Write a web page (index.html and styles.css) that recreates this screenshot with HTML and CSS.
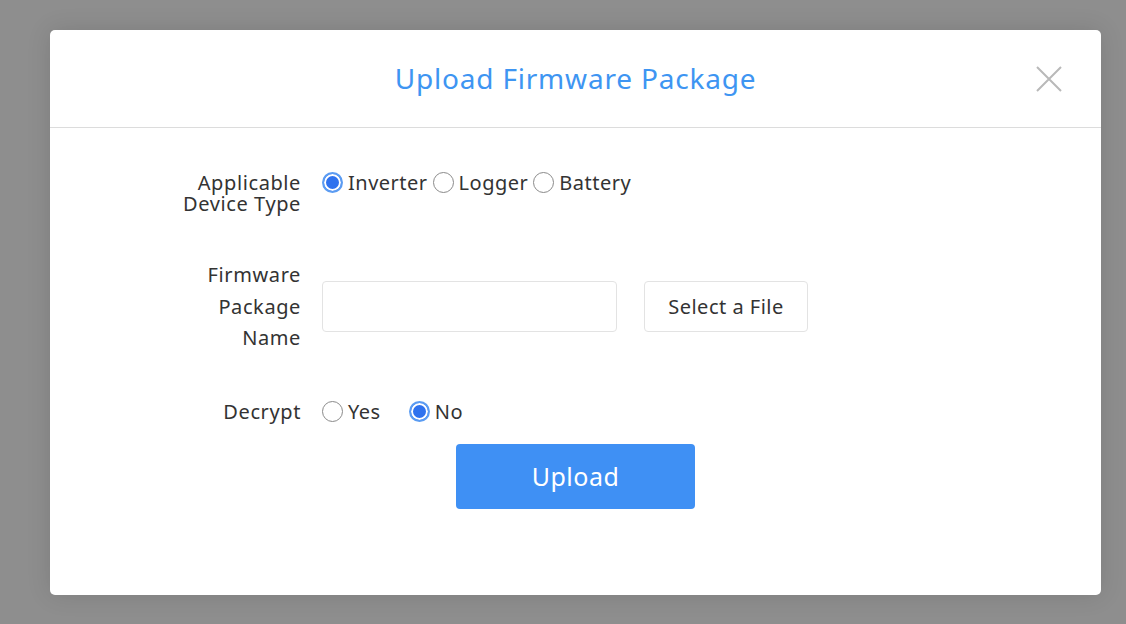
FILE: index.html
```html
<!DOCTYPE html>
<html lang="en">
<head>
  <meta charset="UTF-8" />
  <title>Upload Firmware Package</title>
  <link rel="stylesheet" href="styles.css">
</head>
<body>
  <div class="dialog">
    <div class="dialog-header">
      <h2 class="dialog-title">Upload Firmware Package</h2>
      <span class="close-btn">
        <svg width="26" height="26" viewBox="0 0 26 26"><path d="M1 1L25 25M25 1L1 25" stroke="#b9b9b9" stroke-width="2" fill="none"/></svg>
      </span>
    </div>

    <div class="dialog-body">
      <div class="form-row row-type">
        <div class="form-label">Applicable<br>Device Type</div>
        <div class="radio-group">
          <label class="radio"><span class="dot checked"></span>Inverter</label>
          <label class="radio"><span class="dot"></span>Logger</label>
          <label class="radio"><span class="dot"></span>Battery</label>
        </div>
      </div>

      <div class="form-row row-file">
        <div class="form-label tall">Firmware<br>Package<br>Name</div>
        <div class="file-group">
          <input type="text" class="file-name" />
          <button class="select-btn">Select a File</button>
        </div>
      </div>

      <div class="form-row row-decrypt">
        <div class="form-label">Decrypt</div>
        <div class="radio-group wide">
          <label class="radio"><span class="dot"></span>Yes</label>
          <label class="radio"><span class="dot checked"></span>No</label>
        </div>
      </div>

      <div class="actions">
        <button class="upload-btn">Upload</button>
      </div>
    </div>
  </div>
</body>
</html>
```

FILE: styles.css
```css
* {
  margin: 0;
  padding: 0;
  box-sizing: border-box;
}
body {
  font-family: 'Noto Sans', 'Open Sans', sans-serif;
  background: #8e8e8e;
  color: #333;
  padding: 30px 25px 29px 50px;
  height: 624px;
  overflow: hidden;
}
.dialog {
  width: 1051px;
  height: 565px;
  background: #fff;
  border-radius: 5px;
  box-shadow: 0 0 24px rgba(0, 0, 0, 0.12);
}
.dialog-header {
  position: relative;
  height: 98px;
  border-bottom: 1px solid #dcdcdc;
  display: flex;
  align-items: center;
  justify-content: center;
}
.dialog-title {
  font-size: 28px;
  font-weight: 400;
  letter-spacing: 0.8px;
  color: #3e95f2;
  margin-top: -2px;
}
.close-btn {
  position: absolute;
  right: 39px;
  top: 36px;
  width: 26px;
  height: 26px;
}
.dialog-body {
  padding-top: 44px;
}
.form-row {
  display: flex;
  align-items: center;
}
.row-type {
  align-items: flex-start;
}
.row-file {
  margin-top: 45px;
}
.row-decrypt {
  margin-top: 47px;
}
.form-label {
  width: 251px;
  margin-right: 21px;
  text-align: right;
  font-size: 20px;
  letter-spacing: 0.6px;
  line-height: 21px;
}
.form-label.tall {
  line-height: 31.5px;
}
.radio-group {
  display: flex;
  gap: 5px;
  font-size: 20px;
  letter-spacing: 0.5px;
  line-height: 21px;
}
.radio-group.wide {
  gap: 28px;
}
.radio {
  display: flex;
  align-items: center;
  gap: 5px;
}
.dot {
  width: 21px;
  height: 21px;
  border: 1px solid #8a8a8a;
  border-radius: 50%;
  background: #fff;
}
.dot.checked {
  border: 2px solid #5b9cf2;
  background: #2f72ee;
  box-shadow: inset 0 0 0 2px #fff;
}
.file-group {
  display: flex;
  gap: 27px;
}
.file-name {
  width: 295px;
  height: 51px;
  border: 1px solid #e3e3e3;
  border-radius: 4px;
  outline: none;
}
.select-btn {
  width: 164px;
  height: 51px;
  border: 1px solid #e3e3e3;
  border-radius: 4px;
  background: #fff;
  font-family: inherit;
  font-size: 20px;
  letter-spacing: 0.5px;
  color: #333;
}
.actions {
  display: flex;
  justify-content: center;
  margin-top: 22px;
}
.upload-btn {
  width: 239px;
  height: 65px;
  border: none;
  border-radius: 4px;
  background: #3f90f4;
  color: #fff;
  font-family: inherit;
  font-size: 25px;
  letter-spacing: 0.5px;
}
```
